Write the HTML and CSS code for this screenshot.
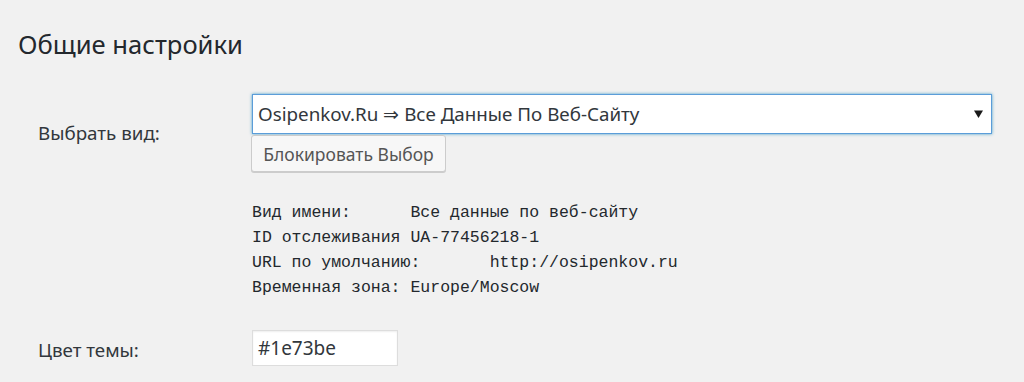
FILE: index.html
```html
<!DOCTYPE html>
<html lang="ru">
<head>
<meta charset="utf-8">
<link rel="stylesheet" href="styles.css">
</head>
<body>
<div class="wrap">
  <h2 class="title">Общие настройки</h2>
  <div class="form">
    <div class="row row-view">
      <div class="label">Выбрать вид:</div>
      <div class="field">
        <div class="select">
          <span class="select-text">Osipenkov.Ru ⇒ Все Данные По Веб-Сайту</span>
          <svg class="arrow" width="9" height="9" viewBox="0 0 9 9"><path d="M0 1.5 H9 L4.5 9 Z" fill="#1a1a1a"/></svg>
        </div>
        <button class="btn">Блокировать Выбор</button>
        <pre class="info">Вид имени:	Все данные по веб-сайту
ID отслеживания UA-77456218-1
URL по умолчанию:	http://osipenkov.ru
Временная зона: Europe/Moscow</pre>
      </div>
    </div>
    <div class="row row-color">
      <div class="label">Цвет темы:</div>
      <div class="field">
        <div class="color-input">#1e73be</div>
      </div>
    </div>
  </div>
</div>
</body>
</html>
```

FILE: styles.css
```css
html, body {
  margin: 0;
  padding: 0;
  background: #f1f1f1;
  height: 382px;
  overflow: hidden;
}
body {
  font-family: "Noto Sans", "Open Sans", sans-serif;
  color: #23282d;
}
.wrap {
  padding: 0 18px;
}
.title {
  margin: 0;
  padding-top: 30px;
  font-size: 25.6px;
  line-height: 30px;
  font-weight: 400;
  color: #23282d;
}
.form {
  margin-top: 34px;
}
.row {
  display: grid;
  grid-template-columns: 234px 740px;
}
.label {
  padding-left: 20px;
  font-size: 18.8px;
  line-height: 24px;
  color: #32373c;
}
.row-view .label {
  padding-top: 27px;
}
.select {
  height: 40px;
  box-sizing: border-box;
  border: 1px solid #5b9dd9;
  box-shadow: 0 0 3px rgba(30, 140, 190, 0.8);
  background: #fff;
  display: flex;
  align-items: center;
  justify-content: space-between;
  padding: 0 8px 0 5px;
}
.select-text {
  font-size: 18.8px;
  color: #32373c;
}
.arrow {
  display: block;
  margin-top: -1px;
}
.btn {
  display: block;
  margin-top: 1px;
  margin-left: -1px;
  height: 37px;
  width: 195px;
  padding: 0 10px;
  font-family: inherit;
  font-size: 17.5px;
  color: #555;
  background: #f7f7f7;
  border: 1px solid #ccc;
  border-radius: 3px;
  box-shadow: 0 1px 0 #ccc;
}
.info {
  margin: 28px 0 0;
  font-family: "Liberation Mono", "DejaVu Sans Mono", monospace;
  font-size: 16.5px;
  line-height: 25px;
  tab-size: 8;
  color: #23282d;
}
.row-color {
  margin-top: 30px;
}
.row-color .label {
  padding-top: 8px;
}
.color-input {
  width: 146px;
  height: 36px;
  box-sizing: border-box;
  border: 1px solid #ddd;
  box-shadow: inset 0 1px 2px rgba(0,0,0,0.07);
  background: #fff;
  font-size: 19px;
  line-height: 34px;
  padding-left: 5px;
  color: #32373c;
}
```
